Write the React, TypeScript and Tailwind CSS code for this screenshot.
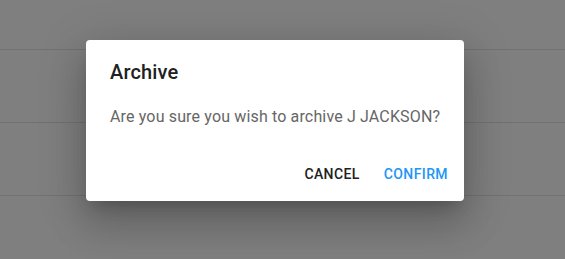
export default function App() {
  return (
    <div className="relative w-[565px] h-[259px] overflow-hidden bg-[#7f7f7f] font-['Roboto',sans-serif]">
      <div className="flex flex-col">
        <div className="h-[50px] border-b border-[#727272]" />
        <div className="h-[73px] border-b border-[#727272]" />
        <div className="h-[73px] border-b border-[#727272]" />
      </div>
      <div className="absolute left-[86px] top-[40px] w-[378px] h-[161px] bg-white rounded-[4px] shadow-[0_11px_15px_-7px_rgba(0,0,0,0.2),0_24px_38px_3px_rgba(0,0,0,0.14),0_9px_46px_8px_rgba(0,0,0,0.12)] flex flex-col">
        <div className="pt-[16px] px-[24px] h-[48px] text-[20px] leading-[32px] font-medium text-[#212121] tracking-[0.0075em]">
          Archive
        </div>
        <div className="mt-[17px] px-[24px] text-[16px] leading-[24px] text-[#666666] tracking-[0.00938em] whitespace-nowrap">
          Are you sure you wish to archive J JACKSON?
        </div>
        <div className="mt-[27px] flex justify-end items-center px-[8px] pb-[8px]">
          <button className="h-[36px] px-[8px] text-[14px] font-medium uppercase tracking-[0.02857em] text-[#212121] rounded-[4px]">
            Cancel
          </button>
          <button className="ml-[8px] h-[36px] px-[8px] text-[14px] font-medium uppercase tracking-[0.02857em] text-[#2196f3] rounded-[4px]">
            Confirm
          </button>
        </div>
      </div>
    </div>
  );
}
